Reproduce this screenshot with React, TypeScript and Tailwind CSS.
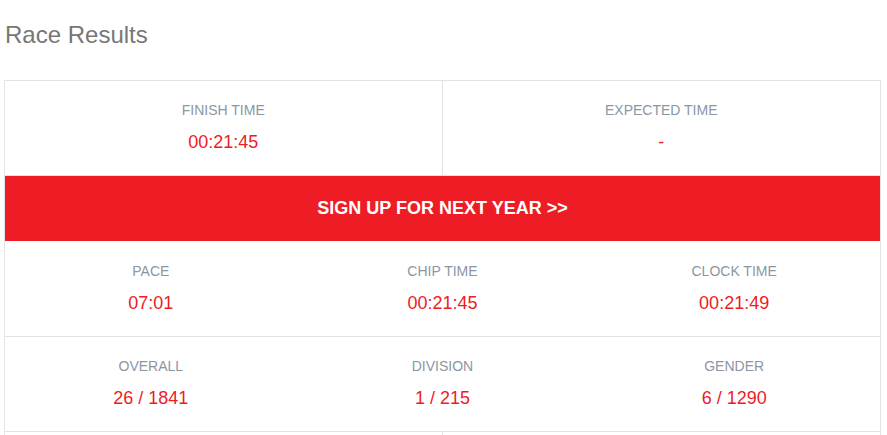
const TOP = [
  { label: "FINISH TIME", value: "00:21:45" },
  { label: "EXPECTED TIME", value: "-" },
];

const ROWS = [
  [
    { label: "PACE", value: "07:01" },
    { label: "CHIP TIME", value: "00:21:45" },
    { label: "CLOCK TIME", value: "00:21:49" },
  ],
  [
    { label: "OVERALL", value: "26 / 1841" },
    { label: "DIVISION", value: "1 / 215" },
    { label: "GENDER", value: "6 / 1290" },
  ],
];

function Stat({ label, value, tall }: { label: string; value: string; tall?: boolean }) {
  return (
    <div className={`flex flex-col items-center pb-[21px] ${tall ? "pt-[20px]" : "pt-[19px]"}`}>
      <span className="text-[14px] leading-5 text-[#8c96a3]">{label}</span>
      <span className="mt-[10px] text-[18px] leading-6 text-[#ee1c25]">{value}</span>
    </div>
  );
}

export default function App() {
  return (
    <div className="min-h-screen bg-white font-['Liberation_Sans',Arial,sans-serif]">
      <h1 className="pl-[5px] pt-[21px] text-[24px] leading-[27px] font-normal text-[#777777]">
        Race Results
      </h1>

      <div className="ml-[4px] mt-[32px] w-[877px] border border-[#e3e3e3]">
        {/* ── Finish / expected ── */}
        <div className="grid grid-cols-2 border-b border-[#e3e3e3]">
          {TOP.map((s, i) => (
            <div key={s.label} className={i === 0 ? "border-r border-[#e3e3e3]" : ""}>
              <Stat {...s} />
            </div>
          ))}
        </div>

        {/* ── Sign up banner ── */}
        <button className="flex h-[65px] w-full items-center justify-center bg-[#ee1c25] text-[18px] font-bold text-white">
          SIGN UP FOR NEXT YEAR &gt;&gt;
        </button>

        {ROWS.map((row, r) => (
          <div
            key={r}
            className={`grid grid-cols-3 ${r > 0 ? "border-t border-[#e3e3e3]" : ""}`}
          >
            {row.map(s => (
              <Stat key={s.label} {...s} tall={r === 0} />
            ))}
          </div>
        ))}

        <div className="grid h-[95px] grid-cols-2 border-t border-[#e3e3e3]">
          <div className="border-r border-[#e3e3e3]" />
          <div />
        </div>
      </div>
    </div>
  );
}
